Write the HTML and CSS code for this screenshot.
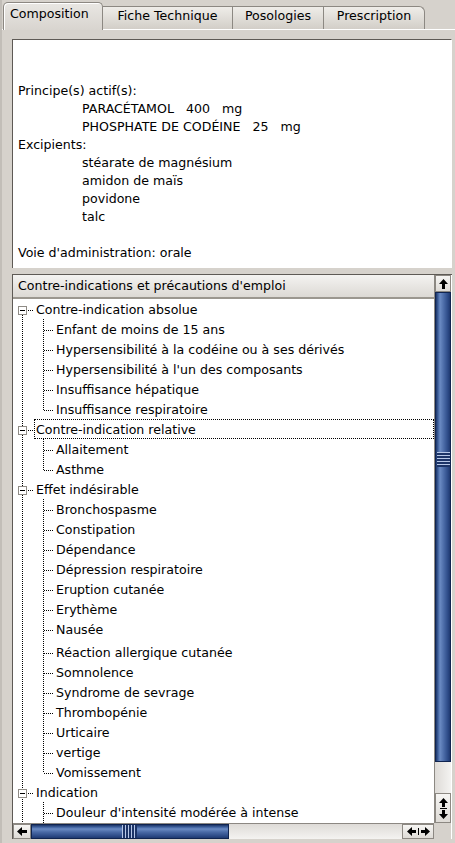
FILE: index.html
```html
<!DOCTYPE html>
<html lang="fr">
<head>
<meta charset="utf-8">
<title>Composition</title>
<link rel="stylesheet" href="styles.css">
</head>
<body>
<div class="window">
  <div class="tabs">
    <div class="tab active t1">Composition</div>
    <div class="tab t2">Fiche Technique</div>
    <div class="tab t3">Posologies</div>
    <div class="tab t4 last">Prescription</div>
  </div>
  <div class="panel">
    <div class="textbox">
      <div class="line"></div>
      <div class="line"></div>
      <div class="line">Principe(s) actif(s):</div>
      <div class="line ind">PARACÉTAMOL   400   mg</div>
      <div class="line ind">PHOSPHATE DE CODÉINE   25   mg</div>
      <div class="line">Excipients:</div>
      <div class="line ind">stéarate de magnésium</div>
      <div class="line ind">amidon de maïs</div>
      <div class="line ind">povidone</div>
      <div class="line ind">talc</div>
      <div class="line"></div>
      <div class="line">Voie d'administration: orale</div>
    </div>
    <div class="treebox">
      <div class="treemain">
        <div class="treehead">Contre-indications et précautions d'emploi</div>
        <div class="treebody">
          <ul class="roots">
            <li>
              <div class="row"><span class="toggle"></span><span class="rconn"></span><span class="label">Contre-indication absolue</span></div>
              <ul class="kids">
                <li class="row"><span class="hconn"></span><span class="label">Enfant de moins de 15 ans</span></li>
                <li class="row"><span class="hconn"></span><span class="label">Hypersensibilité à la codéine ou à ses dérivés</span></li>
                <li class="row"><span class="hconn"></span><span class="label">Hypersensibilité à l'un des composants</span></li>
                <li class="row"><span class="hconn"></span><span class="label">Insuffisance hépatique</span></li>
                <li class="row"><span class="hconn"></span><span class="label">Insuffisance respiratoire</span></li>
              </ul>
            </li>
            <li>
              <div class="row"><span class="toggle"></span><span class="rconn"></span><span class="label focus">Contre-indication relative</span></div>
              <ul class="kids">
                <li class="row"><span class="hconn"></span><span class="label">Allaitement</span></li>
                <li class="row"><span class="hconn"></span><span class="label">Asthme</span></li>
              </ul>
            </li>
            <li>
              <div class="row"><span class="toggle"></span><span class="rconn"></span><span class="label">Effet indésirable</span></div>
              <ul class="kids">
                <li class="row"><span class="hconn"></span><span class="label">Bronchospasme</span></li>
                <li class="row"><span class="hconn"></span><span class="label">Constipation</span></li>
                <li class="row"><span class="hconn"></span><span class="label">Dépendance</span></li>
                <li class="row"><span class="hconn"></span><span class="label">Dépression respiratoire</span></li>
                <li class="row"><span class="hconn"></span><span class="label">Eruption cutanée</span></li>
                <li class="row"><span class="hconn"></span><span class="label">Erythème</span></li>
                <li class="row"><span class="hconn"></span><span class="label">Nausée</span></li>
                <li class="row tall"><span class="hconn"></span><span class="label">Réaction allergique cutanée</span></li>
                <li class="row"><span class="hconn"></span><span class="label">Somnolence</span></li>
                <li class="row"><span class="hconn"></span><span class="label">Syndrome de sevrage</span></li>
                <li class="row"><span class="hconn"></span><span class="label">Thrombopénie</span></li>
                <li class="row"><span class="hconn"></span><span class="label">Urticaire</span></li>
                <li class="row"><span class="hconn"></span><span class="label">vertige</span></li>
                <li class="row"><span class="hconn"></span><span class="label">Vomissement</span></li>
              </ul>
            </li>
            <li>
              <div class="row"><span class="toggle"></span><span class="rconn"></span><span class="label">Indication</span></div>
              <ul class="kids more">
                <li class="row"><span class="hconn"></span><span class="label">Douleur d'intensité modérée à intense</span></li>
                <li class="row"><span class="hconn"></span><span class="label"></span></li>
              </ul>
            </li>
          </ul>
        </div>
      </div>
      <div class="vscroll">
        <div class="sbtn single">
          <svg width="9" height="10" viewBox="0 0 9 10"><path d="M4.5 0 L9 5 L6 5 L6 10 L3 10 L3 5 L0 5 Z" fill="#000"/></svg>
        </div>
        <div class="vthumb"><div class="vgrip"></div></div>
        <div class="vtrack"></div>
        <div class="sbtn vdouble">
          <svg width="9" height="9" viewBox="0 0 9 9"><path d="M4.5 0 L9 5 L6 5 L6 9 L3 9 L3 5 L0 5 Z" fill="#000"/></svg>
          <span class="vsep"></span>
          <svg width="9" height="9" viewBox="0 0 9 9"><path d="M4.5 9 L9 4 L6 4 L6 0 L3 0 L3 4 L0 4 Z" fill="#000"/></svg>
        </div>
      </div>
      <div class="hscroll">
        <div class="sbtn hsingle">
          <svg width="10" height="9" viewBox="0 0 10 9"><path d="M0 4.5 L5 0 L5 3 L10 3 L10 6 L5 6 L5 9 Z" fill="#000"/></svg>
        </div>
        <div class="hthumb"><div class="hgrip"></div></div>
        <div class="htrack"></div>
        <div class="sbtn hdouble">
          <svg width="9" height="9" viewBox="0 0 9 9"><path d="M0 4.5 L5 0 L5 3 L9 3 L9 6 L5 6 L5 9 Z" fill="#000"/></svg>
          <span class="hsep"></span>
          <svg width="9" height="9" viewBox="0 0 9 9"><path d="M9 4.5 L4 0 L4 3 L0 3 L0 6 L4 6 L4 9 Z" fill="#000"/></svg>
        </div>
      </div>
      <div class="corner"></div>
    </div>
  </div>
</div>
</body>
</html>
```
FILE: styles.css
```css
* { box-sizing: border-box; }
html, body { margin: 0; padding: 0; }
body {
  background: #d6d2cc;
  font-family: "DejaVu Sans", "Noto Sans", sans-serif;
  font-size: 12.6px;
  color: #000;
  width: 455px;
  height: 843px;
  overflow: hidden;
}
.window {
  height: 843px;
  display: flex;
  flex-direction: column;
  border-left: 2px solid #c2beb8;
}
.tabs {
  display: flex;
  align-items: flex-end;
  height: 30px;
  flex: none;
  padding-left: 1px;
  border-bottom: 1px solid #ffffff;
}
.tab {
  height: 23px;
  border: 1px solid #8c8882;
  border-bottom: none;
  border-left: none;
  background: linear-gradient(#efede9, #d2cec8);
  display: flex;
  align-items: center;
  justify-content: center;
  white-space: nowrap;
  padding-bottom: 5px;
}
.tab.active {
  height: 28px;
  margin-bottom: -1px;
  border-left: 1px solid #8c8882;
  border-radius: 5px 5px 0 0;
  background: linear-gradient(#e9e7e3, #d8d4cf);
  box-shadow: inset 1px 1px 0 #ffffff;
  padding-bottom: 7px;
  justify-content: flex-start;
  padding-left: 6px;
  position: relative;
}
.tab.last { border-radius: 0 6px 0 0; }
.t1 { width: 100px; }
.t2 { width: 130px; }
.t3 { width: 91px; }
.t4 { width: 101px; }
.panel {
  flex: 1;
  min-height: 0;
  padding: 9px 3px 4px 10px;
  display: flex;
  flex-direction: column;
}
.textbox {
  height: 229px;
  flex: none;
  background: #fff;
  border-top: 1px solid #5e5a55;
  border-left: 1px solid #5e5a55;
  border-right: 1px solid #ffffff;
  padding: 6px 0 0 5px;
}
.line {
  height: 18px;
  line-height: 18px;
  white-space: pre;
}
.line.ind { padding-left: 64px; }
.treebox {
  margin-top: 6px;
  flex: 1;
  min-height: 0;
  display: grid;
  grid-template-columns: 421px 17px;
  grid-template-rows: minmax(0, 1fr) 16px;
  border-top: 1px solid #5e5a55;
  border-left: 1px solid #5e5a55;
  background: #fff;
  overflow: hidden;
}
.treemain {
  display: flex;
  flex-direction: column;
  overflow: hidden;
  min-height: 0;
}
.treehead {
  height: 24px;
  flex: none;
  background: linear-gradient(#f4f3f1, #dcd9d4);
  border-bottom: 2px solid #9b978f;
  padding-left: 5px;
  line-height: 22px;
  white-space: nowrap;
}
.treebody {
  flex: 1;
  overflow: hidden;
  min-height: 0;
}
ul { list-style: none; margin: 0; padding: 0; }
.roots {
  background-image: repeating-linear-gradient(to bottom, #000 0 1px, transparent 1px 2px);
  background-size: 1px 100%;
  background-position: 9px 16px;
  background-repeat: no-repeat;
}
.row {
  height: 20px;
  display: flex;
  align-items: flex-start;
  white-space: nowrap;
}
.row.tall { height: 23px; padding-top: 3px; }
.roots > li > .row { padding-left: 5px; }
.toggle {
  width: 9px;
  height: 9px;
  flex: none;
  border: 1px solid #8f8b85;
  background: #fff linear-gradient(#000, #000) center / 5px 1px no-repeat;
  margin-top: 7px;
}
.rconn {
  width: 6px;
  height: 1px;
  flex: none;
  margin-left: 1px;
  margin-top: 11px;
  background: repeating-linear-gradient(to right, #000 0 1px, transparent 1px 2px);
}
.label {
  height: 20px;
  line-height: 16px;
  padding-top: 2px;
  padding-left: 1px;
  border: 1px solid transparent;
  flex: 1;
}
.label.focus { border: 1px dotted #000; }
.kids {
  margin-left: 30px;
  background-image: repeating-linear-gradient(to bottom, #000 0 1px, transparent 1px 2px);
  background-size: 1px calc(100% - 9px);
  background-repeat: no-repeat;
}
.kids.more { background-size: 1px 100%; }
.kids .row { padding-left: 1px; }
.hconn {
  width: 10px;
  height: 1px;
  flex: none;
  margin-top: 11px;
  background: repeating-linear-gradient(to right, #000 0 1px, transparent 1px 2px);
}
.vscroll {
  display: flex;
  flex-direction: column;
  min-height: 0;
  background: linear-gradient(to right, #e4e2de, #f2f1ef);
  border-left: 1px solid #8c8882;
}
.sbtn {
  background: linear-gradient(#f6f5f3, #dedbd6);
  border: 1px solid #8c8882;
  display: flex;
  align-items: center;
  justify-content: center;
  flex: none;
}
.single { height: 17px; }
.vthumb {
  height: 470px;
  flex: none;
  background: linear-gradient(to right, #1d3566 0, #3d5f9c 2px, #6b8bc3 4px, #4a6aa6 8px, #2c4a86 12px, #14295a 16px);
  border: 1px solid #102450;
  display: flex;
  align-items: center;
  justify-content: center;
  padding-bottom: 135px;
}
.vgrip {
  width: 13px;
  height: 15px;
  background: repeating-linear-gradient(to bottom, #b7c8e8 0 1px, #1c3467 1px 3px);
}
.vtrack { flex: 1; background: linear-gradient(to right, #dedbd7, #f4f3f1); }
.vdouble {
  height: 30px;
  flex-direction: column;
  gap: 1px;
}
.vsep { width: 7px; height: 1px; background: #000; }
.hscroll {
  display: flex;
  background: linear-gradient(#dedbd7, #f4f3f1);
  border-top: 1px solid #8c8882;
}
.hsingle { width: 18px; }
.hthumb {
  width: 198px;
  flex: none;
  background: linear-gradient(to bottom, #1d3566 0, #3d5f9c 2px, #6b8bc3 4px, #4a6aa6 7px, #2c4a86 11px, #14295a 15px);
  border: 1px solid #102450;
  display: flex;
  align-items: center;
  padding-left: 90px;
}
.hgrip {
  width: 15px;
  height: 13px;
  background: repeating-linear-gradient(to right, #b7c8e8 0 1px, #1c3467 1px 3px);
}
.htrack { flex: 1; }
.hdouble { width: 32px; gap: 2px; }
.hsep { width: 1px; height: 7px; background: #000; }
.corner { background: #d6d2cc; }
```
